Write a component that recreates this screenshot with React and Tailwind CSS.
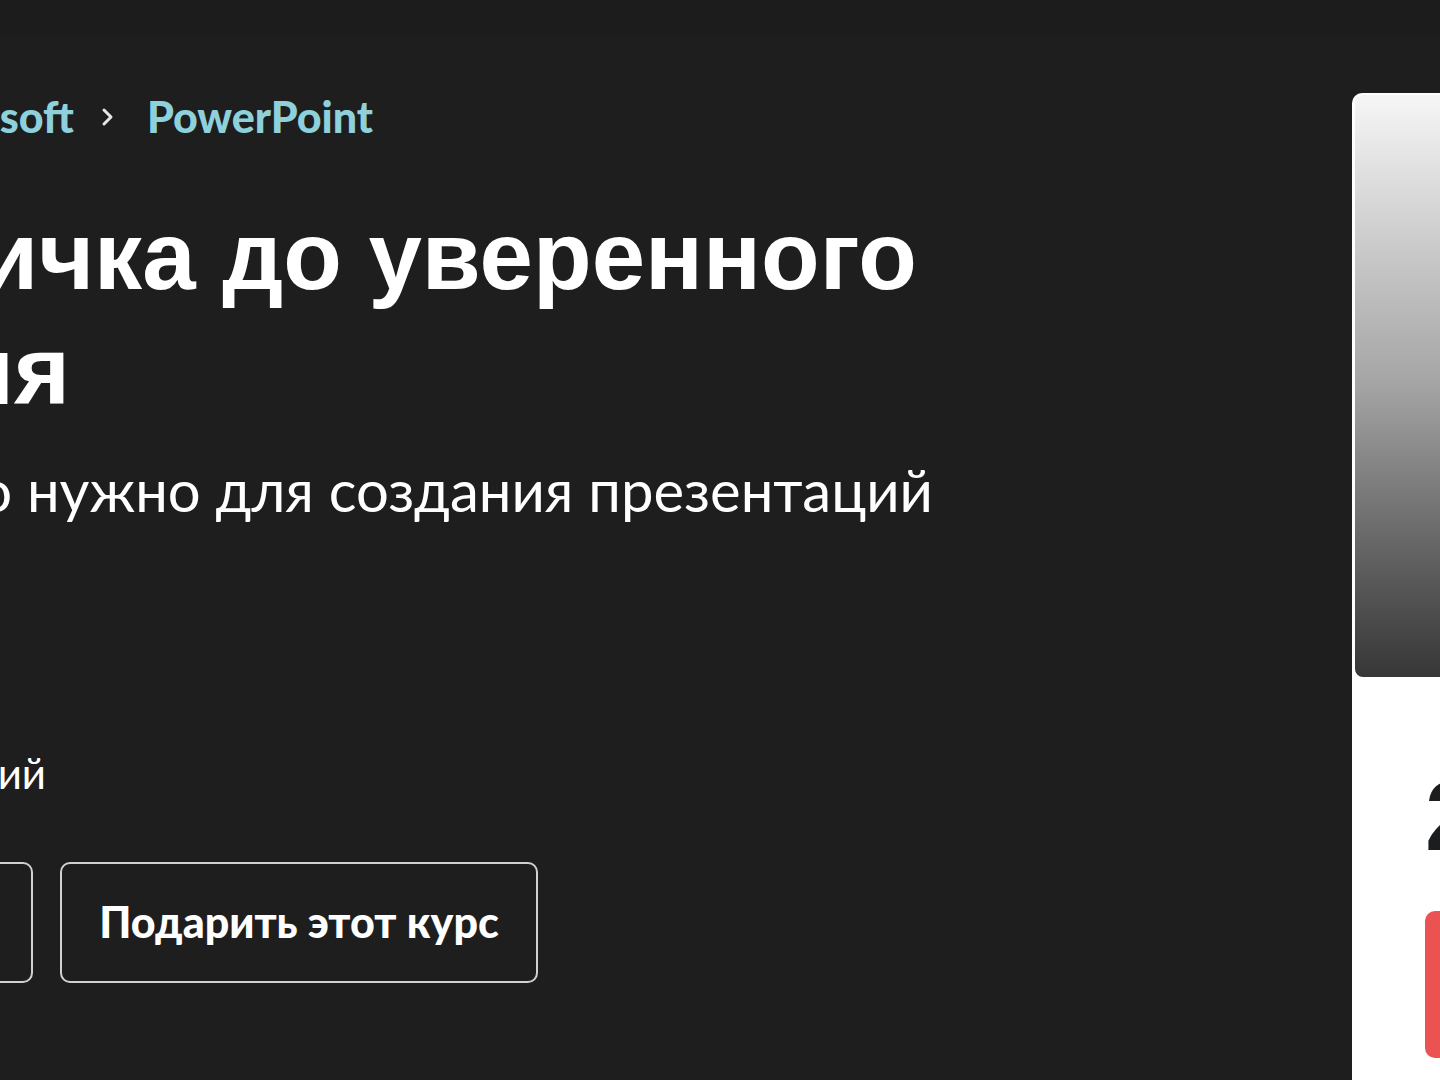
import React from "react";

function Chevron() {
  return (
    <svg width="16" height="24" viewBox="0 0 16 24" fill="none" className="shrink-0">
      <path d="M4 5l7 7-7 7" stroke="#e6e6e6" strokeWidth="3" strokeLinecap="round" strokeLinejoin="round" />
    </svg>
  );
}

export default function App() {
  return (
    <div className="w-[1440px] h-[1080px] overflow-hidden bg-[#1e1e1e] flex flex-col">
      <div className="h-[35px] shrink-0 bg-[#1c1c1c]" />
      <div className="flex flex-1">
        {/* left column */}
        <div className="w-[1352px] shrink-0 flex flex-col">
          {/* breadcrumb */}
          <nav className="mt-[56px] w-[373px] flex justify-end items-center whitespace-nowrap font-['Lato',sans-serif] font-black text-[43px] leading-[1.2] text-[#8ed1dc]">
            <span className="shrink-0">Офисные программы</span>
            <span className="mx-[26px] shrink-0 flex items-center"><Chevron /></span>
            <span className="shrink-0">Microsoft</span>
            <span className="ml-[26px] mr-[31px] shrink-0 flex items-center"><Chevron /></span>
            <span className="shrink-0">PowerPoint</span>
          </nav>

          {/* title */}
          <h1 className="mt-[55px] font-['Liberation_Sans',Arial,sans-serif] font-bold text-[96px] leading-[115px] text-white whitespace-nowrap">
            <div className="w-[917px] flex justify-end">
              <span className="shrink-0">PowerPoint: от новичка до уверенного</span>
            </div>
            <div className="w-[70px] flex justify-end">
              <span className="shrink-0">пользования</span>
            </div>
          </h1>

          {/* subtitle */}
          <div className="mt-[27px] w-[933px] flex justify-end whitespace-nowrap font-['Lato',sans-serif] text-[58px] leading-[1.2] text-white">
            <span className="shrink-0">Всё, что нужно для создания презентаций</span>
          </div>

          {/* language */}
          <div className="mt-[224px] w-[46px] flex justify-end whitespace-nowrap font-['Lato',sans-serif] text-[42px] leading-[1.2] text-white">
            <span className="shrink-0">Русский</span>
          </div>

          {/* buttons */}
          <div className="mt-[63px] w-[538px] flex justify-end gap-[27px] font-['Lato',sans-serif] font-black text-[43px] text-white whitespace-nowrap">
            <div className="shrink-0 h-[121px] px-[40px] flex items-center border-2 border-[#d1d1d1] rounded-[10px]">
              Поделиться
            </div>
            <div className="shrink-0 h-[121px] w-[478px] flex items-center justify-center border-2 border-[#d1d1d1] rounded-[10px]">
              Подарить этот курс
            </div>
          </div>
        </div>

        {/* right card */}
        <div className="mt-[58px] w-[420px] shrink-0 bg-white rounded-tl-[10px] pl-[3px] pt-[2px] flex flex-col">
          <div className="h-[582px] rounded-[8px] bg-linear-to-b from-[#f6f6f6] via-[#a4a4a4] to-[#373737]" />
          <div className="pl-[70px] pt-[90px] font-['Liberation_Sans',Arial,sans-serif] font-bold text-[98px] leading-[1] text-[#1c1d1f] whitespace-nowrap">
            2 990 ₽
          </div>
          <div className="ml-[70px] mt-[46px] h-[147px] w-[330px] rounded-[10px] bg-[#eb5252] flex items-center justify-center font-['Lato',sans-serif] font-bold text-[38px] text-white whitespace-nowrap">
            В корзину
          </div>
        </div>
      </div>
    </div>
  );
}
